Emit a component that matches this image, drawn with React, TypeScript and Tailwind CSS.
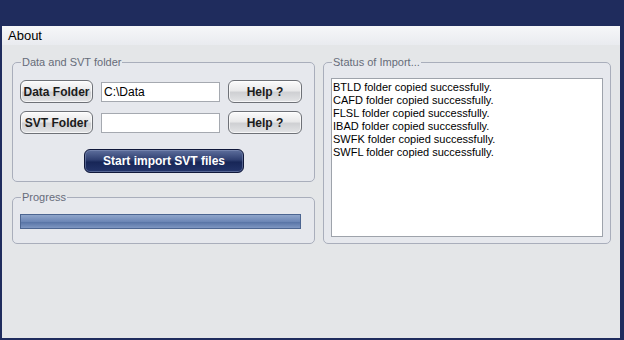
import React from "react"

const font = "font-['Liberation_Sans','Arial',sans-serif]"

const GrayButton: React.FC<{ label: string; className?: string }> = ({ label, className }) => (
    <button
        className={`h-[23px] whitespace-nowrap rounded-[6px] border border-[#6e7177] bg-[linear-gradient(#fbfbfb,#e9e9ea_45%,#cfd0d3_55%,#e3e4e6)] text-[12px] font-bold text-[#1b1b1b] shadow-[inset_0_0_0_1px_#ffffffb0] ${className ?? ""}`}
    >
        {label}
    </button>
)

const Group: React.FC<{ title: string; className?: string; children: React.ReactNode }> = ({ title, className, children }) => (
    <fieldset className={`rounded-[5px] border border-[#a9aebb] bg-[#e6e8ed] ${className ?? ""}`}>
        <legend className="ml-[1px] px-[1px] text-[11px] leading-[14px] text-[#666c7a]">{title}</legend>
        {children}
    </fieldset>
)

const statusLines = [
    "BTLD folder copied successfully.",
    "CAFD folder copied successfully.",
    "FLSL folder copied successfully.",
    "IBAD folder copied successfully.",
    "SWFK folder copied successfully.",
    "SWFL folder copied successfully.",
]

export default function App() {
    return (
        <div className={`flex h-[340px] w-[624px] flex-col bg-[#1f2c5d] pt-[26px] pr-[4px] pb-[2px] pl-[2px] ${font}`}>
            <div className="flex flex-1 flex-col bg-[#e4e6e8]">
                <div className="h-[19px] bg-[linear-gradient(#f6f7f9,#e9ebef)] pl-[6px] text-[13px] leading-[19px] text-black">About</div>
                <div className="flex gap-[8px] pt-[10px] pl-[10px]">
                    <div className="flex w-[303px] flex-col gap-[8px]">
                        <Group title="Data and SVT folder" className="h-[127px] px-[7px] pt-[11px]">
                            <div className="flex flex-col gap-[8px]">
                                <div className="flex items-center">
                                    <GrayButton label="Data Folder" className="w-[73px]" />
                                    <div className="ml-[8px] h-[20px] w-[119px] border border-[#a5a9b0] bg-white pl-[2px] text-[12px] leading-[18px] text-black">C:\Data</div>
                                    <GrayButton label="Help ?" className="ml-[8px] w-[74px]" />
                                </div>
                                <div className="flex items-center">
                                    <GrayButton label="SVT Folder" className="w-[73px]" />
                                    <div className="ml-[8px] h-[20px] w-[119px] border border-[#a5a9b0] bg-white" />
                                    <GrayButton label="Help ?" className="ml-[8px] w-[74px]" />
                                </div>
                            </div>
                            <div className="flex pt-[15px] pl-[64px]">
                                <button className="h-[24px] w-[160px] whitespace-nowrap rounded-[6px] border border-[#10183a] bg-[linear-gradient(#5e6f9d,#2f3f70_45%,#172657_55%,#24356a)] text-[12px] font-bold text-white shadow-[inset_0_0_0_1px_#8c9ac080]">
                                    Start import SVT files
                                </button>
                            </div>
                        </Group>
                        <Group title="Progress" className="h-[54px] px-[7px] pt-[10px]">
                            <div className="h-[15px] w-[281px] border border-[#4c6591] bg-[linear-gradient(#8fa5cb,#6d87b6_50%,#5874a6_55%,#7f97c2)]" />
                        </Group>
                    </div>
                    <Group title="Status of Import..." className="h-[189px] w-[287px] px-[7px] pt-[9px]">
                        <div className="h-[159px] w-[272px] border border-[#9ea3ab] bg-white pl-[1px] pt-[2px] text-[11px] leading-[13px] text-black">
                            {statusLines.map((line) => (
                                <div key={line}>{line}</div>
                            ))}
                        </div>
                    </Group>
                </div>
            </div>
        </div>
    )
}
